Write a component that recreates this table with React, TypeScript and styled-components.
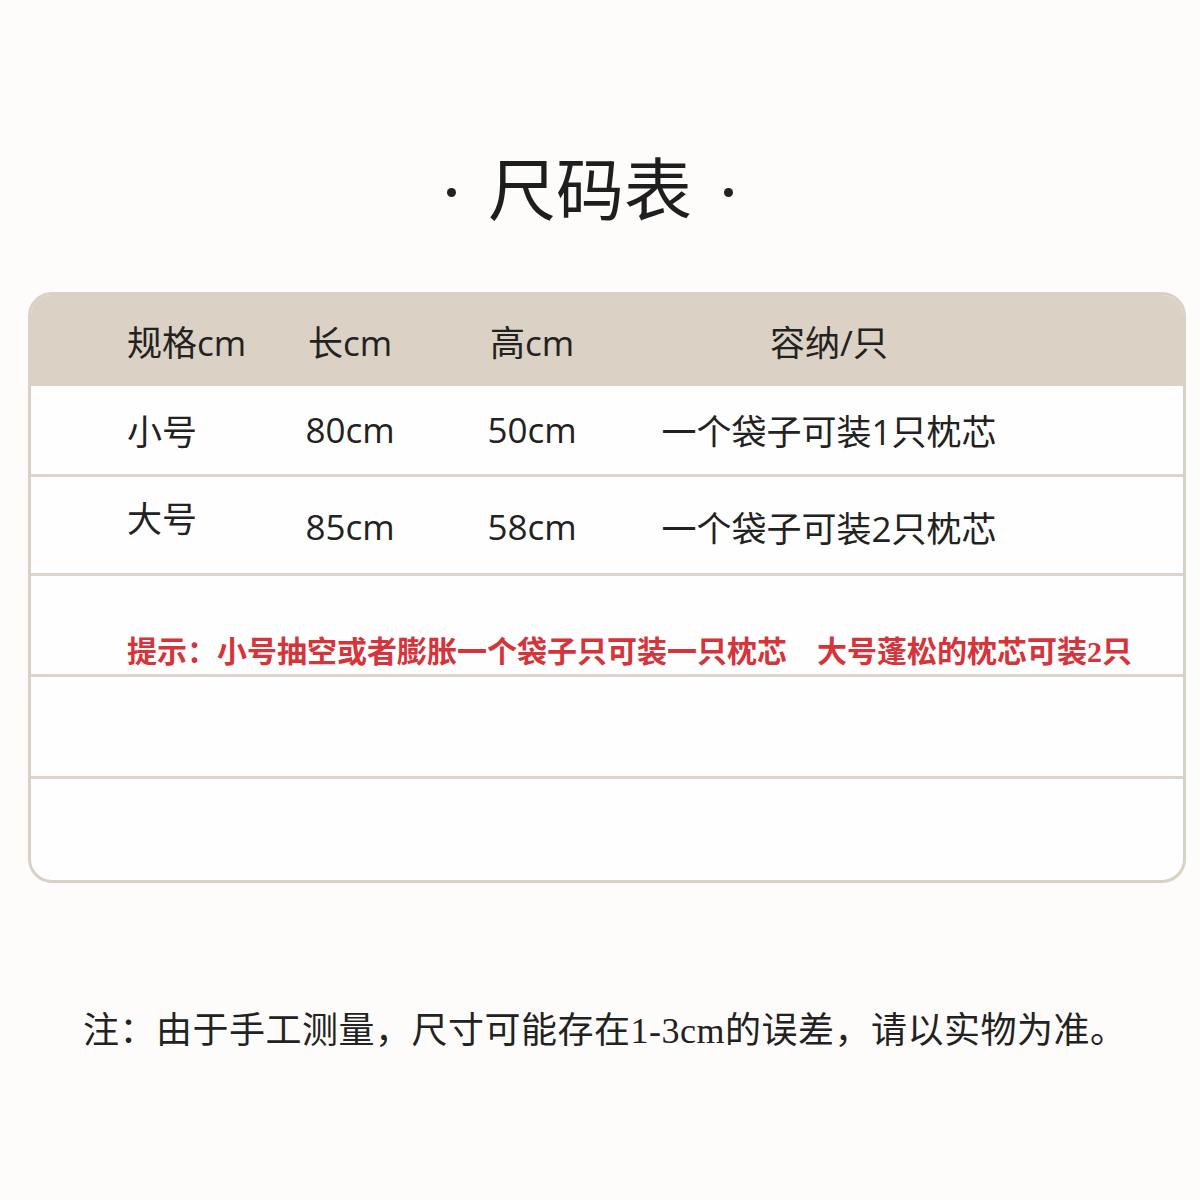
import React from "react";
import styled, { createGlobalStyle } from "styled-components";

const Global = createGlobalStyle`
  html, body { margin: 0; padding: 0; background: #fdfcfb; }
  body { font-family: "Open Sans", "Noto Sans CJK SC", sans-serif; color: #222; }
`;

const Page = styled.div`
  width: 1200px;
  height: 1200px;
  box-sizing: border-box;
  padding-top: 158px;
  display: flex;
  flex-direction: column;
`;

const Title = styled.h1`
  margin: 0;
  display: flex;
  align-items: center;
  justify-content: center;
  gap: 32px;
  font-family: "Liberation Serif", "Noto Sans CJK SC", serif;
  font-size: 68px;
  line-height: 68px;
  font-weight: 400;
  color: #1e1e1e;
  padding-right: 20px;
`;

const Dot = styled.span`
  width: 9px;
  height: 9px;
  border-radius: 50%;
  background: #222;
`;

const Card = styled.div`
  margin: 66px 0 0 28px;
  width: 1158px;
  box-sizing: border-box;
  border: 3px solid #d9d1c6;
  border-radius: 24px;
  overflow: hidden;
  background: #fefefe;
`;

const Grid = styled.div<{ $h: number; $head?: boolean; $line?: boolean }>`
  display: grid;
  grid-template-columns: 239px 160px 204px 390px 1fr;
  align-items: center;
  height: ${(p) => p.$h}px;
  background: ${(p) => (p.$head ? "#dbd1c4" : "transparent")};
  border-top: ${(p) => (p.$line ? "3px solid #ddd5cb" : "none")};
  font-size: 35px;
  color: #222;
`;

const Cell = styled.div<{ $first?: boolean; $dy?: number }>`
  text-align: ${(p) => (p.$first ? "left" : "center")};
  padding-left: ${(p) => (p.$first ? "96px" : "0")};
  white-space: nowrap;
  transform: translateY(${(p) => p.$dy ?? 0}px);
`;

const NoteRow = styled.div<{ $h: number }>`
  height: ${(p) => p.$h}px;
  border-top: 3px solid #ddd5cb;
  display: flex;
  align-items: flex-end;
`;

const Tip = styled.div`
  padding: 0 0 2px 96px;
  font-family: "Liberation Serif", "Noto Sans CJK SC", serif;
  font-weight: 700;
  font-size: 30px;
  line-height: 40px;
  color: #d4343a;
  white-space: pre;
`;

const Empty = styled.div<{ $h: number }>`
  height: ${(p) => p.$h}px;
  border-top: 3px solid #ddd5cb;
`;

const Note = styled.p`
  margin: 128px 0 0 83px;
  font-family: "Liberation Serif", "Noto Sans CJK SC", serif;
  font-size: 36px;
  line-height: 40px;
  letter-spacing: 0.5px;
  color: #222;
  white-space: nowrap;
`;

const rows = [
  { name: "小号", len: "80cm", h: "50cm", cap: "一个袋子可装1只枕芯", rh: 88, dy: -1, ndy: -1 },
  { name: "大号", len: "85cm", h: "58cm", cap: "一个袋子可装2只枕芯", rh: 96, dy: 1, ndy: -9 },
];

export default function App() {
  return (
    <>
      <Global />
      <Page>
        <Title>
          <Dot />
          <span>尺码表</span>
          <Dot />
        </Title>
        <Card>
          <Grid $h={91} $head>
            <Cell $first>规格cm</Cell>
            <Cell>长cm</Cell>
            <Cell>高cm</Cell>
            <Cell>容纳/只</Cell>
            <Cell />
          </Grid>
          {rows.map((r, i) => (
            <Grid key={r.name} $h={r.rh} $line={i > 0}>
              <Cell $first $dy={r.ndy}>{r.name}</Cell>
              <Cell $dy={r.dy}>{r.len}</Cell>
              <Cell $dy={r.dy}>{r.h}</Cell>
              <Cell $dy={r.dy}>{r.cap}</Cell>
              <Cell />
            </Grid>
          ))}
          <NoteRow $h={98}>
            <Tip>提示：小号抽空或者膨胀一个袋子只可装一只枕芯　大号蓬松的枕芯可装2只</Tip>
          </NoteRow>
          <Empty $h={99} />
          <Empty $h={101} />
        </Card>
        <Note>注：由于手工测量，尺寸可能存在1-3cm的误差，请以实物为准。</Note>
      </Page>
    </>
  );
}
